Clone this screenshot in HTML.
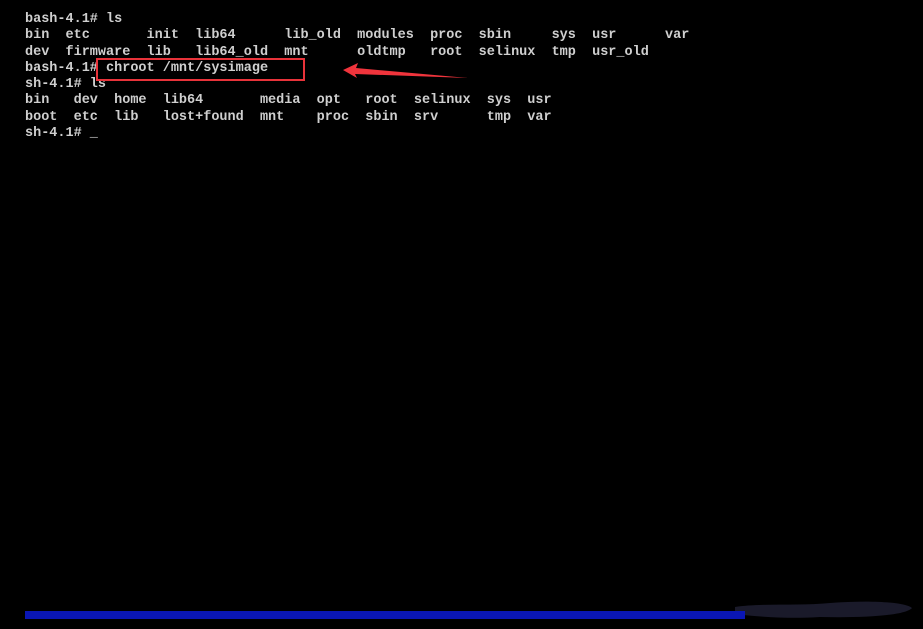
<!DOCTYPE html>
<html><head><meta charset="utf-8"><style>
html,body{margin:0;padding:0;background:#000;width:923px;height:629px;overflow:hidden;position:relative}
pre{position:absolute;left:25px;top:12px;margin:0;font-family:"Liberation Mono",monospace;font-size:13.5px;line-height:16.3px;color:#cfcfcf;font-weight:bold;letter-spacing:0}
.box{position:absolute;left:96px;top:58px;width:205px;height:19px;border:2px solid #e8333a}
.bar{position:absolute;left:25px;top:611px;width:720px;height:8px;background:#0a16b4}
</style></head><body>
<pre>bash-4.1# ls
bin  etc       init  lib64      lib_old  modules  proc  sbin     sys  usr      var
dev  firmware  lib   lib64_old  mnt      oldtmp   root  selinux  tmp  usr_old
bash-4.1# chroot /mnt/sysimage
sh-4.1# ls
bin   dev  home  lib64       media  opt   root  selinux  sys  usr
boot  etc  lib   lost+found  mnt    proc  sbin  srv      tmp  var
sh-4.1# _</pre>
<div class="box"></div>
<svg style="position:absolute;left:0;top:0" width="923" height="629">
<polygon points="343,70 358,63 356,68 468,78 355,74 357,78" fill="#f0343c"/>
<path d="M735,607 C760,603 800,606 830,603 C870,600 905,602 912,608 C905,616 860,618 820,617 C790,619 760,617 735,614 Z" fill="#1a1a2a"/>
</svg>
<div class="bar"></div>
</body></html>
